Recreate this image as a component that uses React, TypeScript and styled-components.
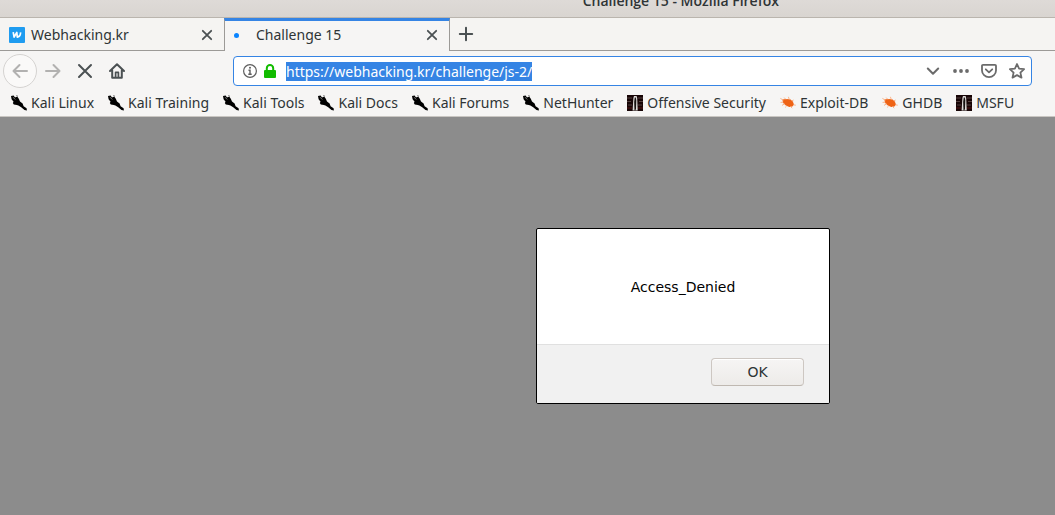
import React from "react";
import styled, { createGlobalStyle, css } from "styled-components";

const GlobalStyle = createGlobalStyle`
  *, *::before, *::after { box-sizing: border-box; }
  html, body, #root { height: 100%; }
  body {
    margin: 0;
    background: #8c8c8c;
    color: #2e3436;
    font: 14px/20px "Noto Sans", sans-serif;
  }
  button { font: inherit; color: inherit; padding: 0; border: 0; background: none; }
`;

const Window = styled.div`
  display: flex;
  flex-direction: column;
  height: 100%;
  min-height: 420px;
  overflow: hidden;
`;

const TitleBar = styled.header`
  display: flex;
  flex-direction: column;
  justify-content: flex-end;
  align-items: flex-end;
  height: 18px;
  padding: 0 276px 6px 0;
  overflow: hidden;
  background: linear-gradient(#dedad7, #d9d5d1);
  border-bottom: 1px solid #bab5ae;
  flex: none;
`;

const Title = styled.h1`
  margin: 0;
  font-family: "Open Sans", sans-serif;
  font-size: 14px;
  line-height: 20px;
  font-weight: 600;
  white-space: nowrap;
`;

const TabStrip = styled.div`
  display: flex;
  flex: none;
  height: 33px;
  background: #f5f4f2;
`;

const Tab = styled.div<{ $active?: boolean }>`
  display: flex;
  align-items: center;
  flex: none;
  ${({ $active }) =>
    $active
      ? css`
          width: 226px;
          padding: 0 9px 2px 9px;
          background: #f6f5f4;
          border: 1px solid #9c9a97;
          border-top: 3px solid #3584e4;
          border-bottom: 0;
        `
      : css`
          width: 224px;
          padding: 2px 9px 0 9px;
          border-bottom: 1px solid #9c9a97;
        `}
`;

const TabTitle = styled.span`
  flex: 1;
  margin-left: 6px;
  white-space: nowrap;
`;

const LoadingSlot = styled.span`
  display: flex;
  width: 16px;
`;

const LoadingDot = styled.span`
  width: 5px;
  height: 5px;
  border-radius: 50%;
  background: #0a84ff;
`;

const IconButton = styled.button<{ $size?: number; $ring?: boolean; $dim?: boolean }>`
  display: grid;
  place-items: center;
  flex: none;
  width: ${({ $size = 32 }) => $size}px;
  height: ${({ $size = 32 }) => $size}px;
  color: ${({ $dim }) => ($dim ? "#b2b1b0" : "#4b5153")};
  ${({ $ring }) =>
    $ring &&
    css`
      border: 1px solid #d5d3d1;
      border-radius: 50%;
      background: #faf9f8;
    `}
`;

const StripRest = styled.div`
  display: flex;
  align-items: center;
  flex: 1;
  border-bottom: 1px solid #9c9a97;
`;

const Toolbar = styled.nav`
  display: flex;
  align-items: center;
  flex: none;
  height: 40px;
  padding-left: 3px;
  background: #f6f5f4;
`;

const NavButtons = styled.div`
  display: flex;
  align-items: center;
  flex: none;
  width: 230px;
`;

const UrlBar = styled.form`
  display: flex;
  align-items: center;
  flex: 1;
  min-width: 0;
  height: 30px;
  margin-right: 23px;
  padding: 0 2px 0 8px;
  gap: 4px;
  color: #5e5e5e;
  background: #fff;
  border: 1px solid #3584e4;
  border-radius: 4px;
`;

const UrlText = styled.input`
  flex: 1;
  min-width: 0;
  height: 22px;
  margin-left: 4px;
  padding: 1px 0 0;
  border: 0;
  outline: 0;
  font: inherit;
  background: transparent;
  color: #2e3436;
  &::selection { color: #fff; background: #3584e4; }
`;

const UrlActions = styled.div`
  display: flex;
  flex: none;
  gap: 4px;
  color: #6b6b6b;
  button { color: inherit; }
`;

const Bookmarks = styled.nav`
  display: flex;
  align-items: center;
  flex: none;
  gap: 14px;
  height: 26px;
  padding: 0 11px 2px;
  overflow: hidden;
  background: #f6f5f4;
  border-bottom: 1px solid #c9c6c2;
`;

const Bookmark = styled.a`
  display: flex;
  align-items: center;
  flex: none;
  gap: 4px;
  color: inherit;
  text-decoration: none;
  white-space: nowrap;
`;

const Page = styled.main`
  display: flex;
  flex: 1;
  justify-content: flex-end;
  align-items: flex-start;
  padding: 111px 225px 0 0;
`;

const Dialog = styled.section`
  width: 294px;
  background: #fff;
  border: 1px solid #000;
  border-radius: 2px;
  overflow: hidden;
  font-family: "DejaVu Sans", sans-serif;
`;

const Message = styled.p`
  margin: 0;
  padding: 48px 24px 47px;
  color: #000;
  text-align: center;
`;

const DialogFooter = styled.footer`
  display: flex;
  justify-content: flex-end;
  padding: 13px 25px 17px;
  background: #f1f1f1;
  border-top: 1px solid #e0e0e0;
`;

const OkButton = styled.button`
  && {
    width: 93px;
    height: 28px;
    color: #2e3436;
    border: 1px solid #cdc7c2;
    border-bottom-color: #bfb8b1;
    border-radius: 4px;
    background: linear-gradient(#f6f5f4, #edebe9);
    box-shadow: inset 0 1px #fff;
  }
`;

const Stroke = ({ d, size = 16, width = 2 }: { d: string; size?: number; width?: number }) => (
  <svg width={size} height={size} viewBox="0 0 16 16" fill="none" stroke="currentColor" strokeWidth={width} strokeLinecap="round" strokeLinejoin="round" aria-hidden="true">
    <path d={d} />
  </svg>
);

const CloseIcon = () => <Stroke d="M3.8 3.8l8.4 8.4M12.2 3.8l-8.4 8.4" width={1.8} />;

const SiteIcon = () => (
  <svg width="16" height="16" viewBox="0 0 16 16" aria-hidden="true">
    <rect width="16" height="16" rx="1" fill="#1f9cf0" />
    <path d="M4.2 5.2l.9 5L7.8 5.4l.5 4.8c2.2-.6 3.4-2.6 3.2-4.8" fill="none" stroke="#fff" strokeWidth="1.7" strokeLinejoin="round" />
  </svg>
);

const HomeIcon = () => (
  <svg width="16" height="16" viewBox="0 0 16 16" fill="none" stroke="currentColor" strokeWidth="2" strokeLinecap="round" strokeLinejoin="round" aria-hidden="true">
    <path d="M1 8l7-6.8L15 8M3.2 7.5v7.2h9.6V7.5" />
    <path d="M6.6 14V9.4h2.8V14" strokeWidth="1.7" />
  </svg>
);

const InfoIcon = () => (
  <svg width="16" height="16" viewBox="0 0 16 16" fill="none" stroke="currentColor" aria-hidden="true">
    <circle cx="8" cy="8" r="6.4" strokeWidth="1.2" />
    <path d="M6.5 7.2H8v4M6.3 11.3h3.4" strokeWidth="1.4" />
    <circle cx="8" cy="4.7" r="1" fill="currentColor" stroke="none" />
  </svg>
);

const LockIcon = () => (
  <svg width="16" height="16" viewBox="0 0 16 16" aria-hidden="true">
    <rect x="2" y="7" width="12" height="8" rx="1" fill="#12bc00" />
    <path d="M4.8 8V5.2a3.2 3.2 0 0 1 6.4 0V8" fill="none" stroke="#12bc00" strokeWidth="2" />
  </svg>
);

const DotsIcon = () => (
  <svg width="16" height="16" viewBox="0 0 16 16" fill="currentColor" aria-hidden="true">
    <circle cx="2" cy="8" r="1.9" />
    <circle cx="8" cy="8" r="1.9" />
    <circle cx="14" cy="8" r="1.9" />
  </svg>
);

const PocketIcon = () => (
  <svg width="16" height="16" viewBox="0 0 16 16" fill="none" stroke="currentColor" strokeWidth="1.8" strokeLinecap="round" strokeLinejoin="round" aria-hidden="true">
    <path d="M2 1.8h12a1 1 0 0 1 1 1v4.7a7 6.6 0 0 1-14 0V2.8a1 1 0 0 1 1-1z" />
    <path d="M4.8 6.3L8 9.3l3.2-3" />
  </svg>
);

const KaliIcon = () => (
  <svg width="16" height="16" viewBox="0 0 16 16" aria-hidden="true">
    <path d="M0 1l2.6-.4L4 2.6 6.2 1.4l1.6 2.4 1.2 2.8 2.6 1.8 1 2.8 3 2 .3 2.2-2.4-.4-3.3-2.8-2.8-1.8-1.6-.4-3-.4-1-1.6.8-1.2L.6 4.2z" fill="#000" />
    <path d="M1.8 2.2l2.6 2.2" stroke="#8a8a8a" strokeWidth=".8" />
    <path d="M5.4.4l1.4.8" stroke="#444" strokeWidth=".8" />
  </svg>
);

const OffsecIcon = () => (
  <svg width="16" height="16" viewBox="0 0 16 16" aria-hidden="true">
    <rect width="16" height="16" fill="#170506" />
    <path d="M0 3h5M0 6.5h4M1 10h4M11 3h5M12 6.5h4M11 10h4" stroke="#54403f" strokeWidth="1" />
    <path d="M0 13h5M11 13h5" stroke="#350b0c" strokeWidth="2" />
    <path d="M7 1h2.6l.6 2 .5 12.4H5.6L6.4 3z" fill="#dedad8" />
    <path d="M7.8 2.4h1l.5 3-.3 8.2-.6 1.8h-.9L7.2 7z" fill="#15100f" />
  </svg>
);

const ExploitIcon = () => (
  <svg width="16" height="16" viewBox="0 0 16 16" aria-hidden="true">
    <path d="M2.4 4.6l3.4-.6 4.4.2 2.6 2.4 1.2 2.8-1.6 2-3.2.6-3.3-1.4-2.8-2.6z" fill="#ef6315" />
    <path d="M.4 3.4l3 1.8M4.2 2.6l1.8 2M8.4 1.8l1 3M.6 7.4l2.8-.2M2 10.4l2.6-1.6M12 5.8l1.6-.8M13.4 9.8l2.4.4M6.6 11l-1.4 1.4M10.4 11.4l1.8 1.8" stroke="#f9ad80" strokeWidth=".9" fill="none" />
  </svg>
);

const marks = { kali: KaliIcon, offsec: OffsecIcon, exploit: ExploitIcon };

const bookmarks: { label: string; icon: keyof typeof marks }[] = [
  { label: "Kali Linux", icon: "kali" },
  { label: "Kali Training", icon: "kali" },
  { label: "Kali Tools", icon: "kali" },
  { label: "Kali Docs", icon: "kali" },
  { label: "Kali Forums", icon: "kali" },
  { label: "NetHunter", icon: "kali" },
  { label: "Offensive Security", icon: "offsec" },
  { label: "Exploit-DB", icon: "exploit" },
  { label: "GHDB", icon: "exploit" },
  { label: "MSFU", icon: "offsec" },
];

export default function App() {
  const url = React.useRef<HTMLInputElement>(null);

  React.useEffect(() => {
    url.current?.focus();
    url.current?.select();
  }, []);

  return (
    <Window>
      <GlobalStyle />
      <TitleBar>
        <Title>Challenge 15 - Mozilla Firefox</Title>
      </TitleBar>
      <TabStrip>
        <Tab>
          <SiteIcon />
          <TabTitle>Webhacking.kr</TabTitle>
          <IconButton $size={16} aria-label="Close Webhacking.kr"><CloseIcon /></IconButton>
        </Tab>
        <Tab $active>
          <LoadingSlot><LoadingDot /></LoadingSlot>
          <TabTitle>Challenge 15</TabTitle>
          <IconButton $size={16} aria-label="Close Challenge 15"><CloseIcon /></IconButton>
        </Tab>
        <StripRest>
          <IconButton aria-label="New tab"><Stroke d="M8 1.8v12.4M1.8 8h12.4" /></IconButton>
        </StripRest>
      </TabStrip>
      <Toolbar>
        <NavButtons>
          <IconButton $size={34} $ring $dim aria-label="Back"><Stroke d="M15 8H1.5M7.5 2l-6 6 6 6" /></IconButton>
          <IconButton $dim aria-label="Forward"><Stroke d="M1 8h13.5M8.5 2l6 6-6 6" /></IconButton>
          <IconButton aria-label="Stop"><Stroke d="M2 2l12 12M14 2L2 14" /></IconButton>
          <IconButton aria-label="Home"><HomeIcon /></IconButton>
        </NavButtons>
        <UrlBar onSubmit={(e) => e.preventDefault()}>
          <InfoIcon />
          <LockIcon />
          <UrlText ref={url} aria-label="Address" defaultValue="https://webhacking.kr/challenge/js-2/" />
          <UrlActions>
            <IconButton type="button" $size={24} aria-label="Show history"><Stroke d="M2.8 5.5L8 10.8l5.2-5.3" /></IconButton>
            <IconButton type="button" $size={24} aria-label="Page actions"><DotsIcon /></IconButton>
            <IconButton type="button" $size={24} aria-label="Save to Pocket"><PocketIcon /></IconButton>
            <IconButton type="button" $size={24} aria-label="Bookmark this page">
              <Stroke width={1.8} d="M8 1l2.1 4.6 5 .6-3.7 3.4 1.1 5L8 12.1l-4.5 2.5 1.1-5L.9 6.2l5-.6z" />
            </IconButton>
          </UrlActions>
        </UrlBar>
      </Toolbar>
      <Bookmarks>
        {bookmarks.map(({ label, icon }) => {
          const Mark = marks[icon];
          return (
            <Bookmark key={label} href="#">
              <Mark />
              {label}
            </Bookmark>
          );
        })}
      </Bookmarks>
      <Page>
        <Dialog role="alertdialog" aria-labelledby="message">
          <Message id="message">Access_Denied</Message>
          <DialogFooter>
            <OkButton>OK</OkButton>
          </DialogFooter>
        </Dialog>
      </Page>
    </Window>
  );
}
